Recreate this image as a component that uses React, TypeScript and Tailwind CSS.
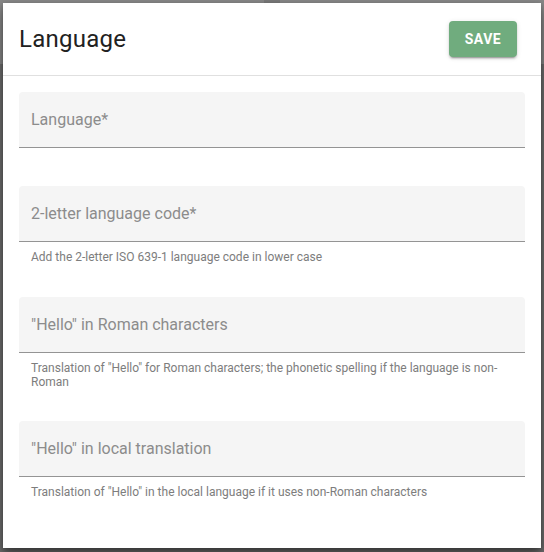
const fields = [
  { label: "Language*", helper: [], gap: "mb-[38px]" },
  {
    label: "2-letter language code*",
    helper: ["Add the 2-letter ISO 639-1 language code in lower case"],
    gap: "mb-[33px]",
  },
  {
    label: "\"Hello\" in Roman characters",
    helper: [
      "Translation of \"Hello\" for Roman characters; the phonetic spelling if the language is non-",
      "Roman",
    ],
    gap: "mb-[32px]",
  },
  {
    label: "\"Hello\" in local translation",
    helper: ["Translation of \"Hello\" in the local language if it uses non-Roman characters"],
    gap: "",
  },
];

const Field = ({ label, helper, gap }: { label: string; helper: string[]; gap: string }) => (
  <div className={gap}>
    <div className="h-[56px] bg-[#f5f5f5] rounded-t-[4px] border-b border-[#949494] flex items-center px-3">
      <span className="text-[16px] text-[#8c8c8c]">{label}</span>
    </div>
    {helper.length > 0 && (
      <div className="pt-2 px-3 text-[12px] leading-[14px] text-[#7d7d7d]">
        {helper.map((line) => (
          <div key={line}>{line}</div>
        ))}
      </div>
    )}
  </div>
);

const App = () => {
  return (
    <div
      className="relative w-[544px] h-[552px] overflow-hidden bg-[#6e6e6e]"
      style={{ fontFamily: "Roboto, 'Liberation Sans', sans-serif" }}
    >
      {/* page behind the modal */}
      <div className="h-[64px] bg-[#888888] flex">
        <div className="ml-[264px] w-[16px] h-[3px] bg-[#7a7a7a]"></div>
      </div>

      {/* dialog */}
      <div className="absolute left-[3px] top-[3px] w-[538px] h-[545px] bg-white shadow-[0_8px_12px_rgba(0,0,0,0.35),0_2px_6px_rgba(0,0,0,0.3)]">
        <div className="h-[73px] flex items-center justify-between pl-4 pr-6 border-b border-[#e0e0e0]">
          <h2 className="text-[24px] text-[#212121] tracking-[0.01em] leading-none">Language</h2>
          <button className="h-[36px] px-4 rounded-[4px] bg-[#70ac7e] text-white text-[14px] font-bold tracking-[0.03em] shadow-[0_3px_1px_-2px_rgba(0,0,0,0.2),0_2px_2px_0_rgba(0,0,0,0.14),0_1px_5px_0_rgba(0,0,0,0.12)]">
            SAVE
          </button>
        </div>
        <div className="pt-4 px-4">
          {fields.map((f) => (
            <Field key={f.label} {...f} />
          ))}
        </div>
      </div>
    </div>
  );
};

export default App;
